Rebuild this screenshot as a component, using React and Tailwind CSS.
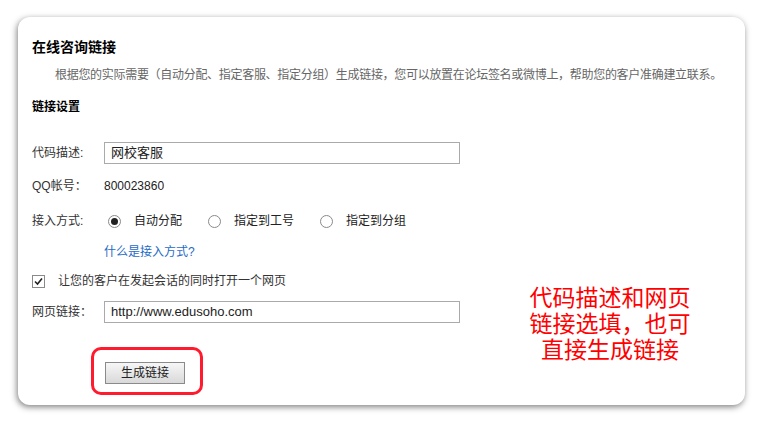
import React, { useState } from 'react'

const font = { fontFamily: '"Liberation Sans", "Noto Sans CJK SC", sans-serif' }

const Radio = ({ checked }) => (
  <span className="w-[13px] h-[13px] rounded-full border border-[#8a8a8a] bg-white flex items-center justify-center">
    {checked && <span className="w-[7px] h-[7px] rounded-full bg-[#222]" />}
  </span>
)

const App = () => {
  const [mode, setMode] = useState(0)
  const options = ['自动分配', '指定到工号', '指定到分组']

  return (
    <div className="w-[763px] h-[424px] bg-white pt-[17px] pl-[18px]" style={font}>
      <div className="relative w-[727px] h-[388px] bg-white rounded-[12px] shadow-[-1px_2px_6px_rgba(0,0,0,0.5)] pt-[20px] pl-[14px] text-[12px] text-[#333]">
        <h2 className="text-[14px] leading-[20px] font-bold text-black">在线咨询链接</h2>
        <p className="mt-[8px] leading-[20px] text-[#666] pl-[23px] tracking-[-0.3px]">
          根据您的实际需要（自动分配、指定客服、指定分组）生成链接，您可以放置在论坛签名或微博上，帮助您的客户准确建立联系。
        </p>
        <h3 className="mt-[12px] leading-[20px] font-bold text-black">链接设置</h3>

        <div className="mt-[25px] flex items-center h-[22px]">
          <span className="w-[72px]">代码描述:</span>
          <div className="w-[356px] h-[22px] border border-[#aaa] px-[6px] flex items-center text-[13px] text-[#222]">网校客服</div>
        </div>

        <div className="mt-[11px] flex items-center h-[22px]">
          <span className="w-[72px]">QQ帐号：</span>
          <span className="text-[#222]">800023860</span>
        </div>

        <div className="mt-[13px] flex items-center h-[22px]">
          <span className="w-[72px]">接入方式:</span>
          <div className="flex items-center pl-[4px]">
            {options.map((o, i) => (
              <label key={o} onClick={() => setMode(i)} className="flex items-center mr-[26px] cursor-pointer">
                <Radio checked={mode === i} />
                <span className="ml-[13px] text-[#222]">{o}</span>
              </label>
            ))}
          </div>
        </div>

        <div className="mt-[10px] pl-[72px] leading-[20px]">
          <a href="#" className="text-[#1e6bc6]">什么是接入方式?</a>
        </div>

        <div className="mt-[9px] flex items-center h-[20px]">
          <span className="w-[13px] h-[13px] border border-[#8a8a8a] flex items-center justify-center">
            <svg width="9" height="9" viewBox="0 0 9 9">
              <path d="M1 4.5 L3.5 7 L8 1.5" fill="none" stroke="#222" strokeWidth="1.6" />
            </svg>
          </span>
          <span className="ml-[13px]">让您的客户在发起会话的同时打开一个网页</span>
        </div>

        <div className="mt-[10px] flex items-center h-[22px]">
          <span className="w-[72px]">网页链接：</span>
          <div className="w-[356px] h-[22px] border border-[#aaa] px-[6px] flex items-center text-[13px] text-[#222]">http://www.edusoho.com</div>
        </div>

        <div className="mt-[24px] ml-[59px] w-[112px] h-[48px] border-[3px] border-[#ff1a2e] rounded-[10px] pt-[12px] pl-[11px]">
          <button className="w-[80px] h-[22px] border border-[#8a8a8a] bg-gradient-to-b from-[#f7f7f7] to-[#d9d9d9] text-[12px] text-[#222] flex items-center justify-center">
            生成链接
          </button>
        </div>

        <div className="absolute left-[502px] top-[268px] w-[180px] text-center text-[23px] leading-[26px] text-[#ff0000]">
          代码描述和网页<br />链接选填，也可<br />直接生成链接
        </div>
      </div>
    </div>
  )
}

export default App
